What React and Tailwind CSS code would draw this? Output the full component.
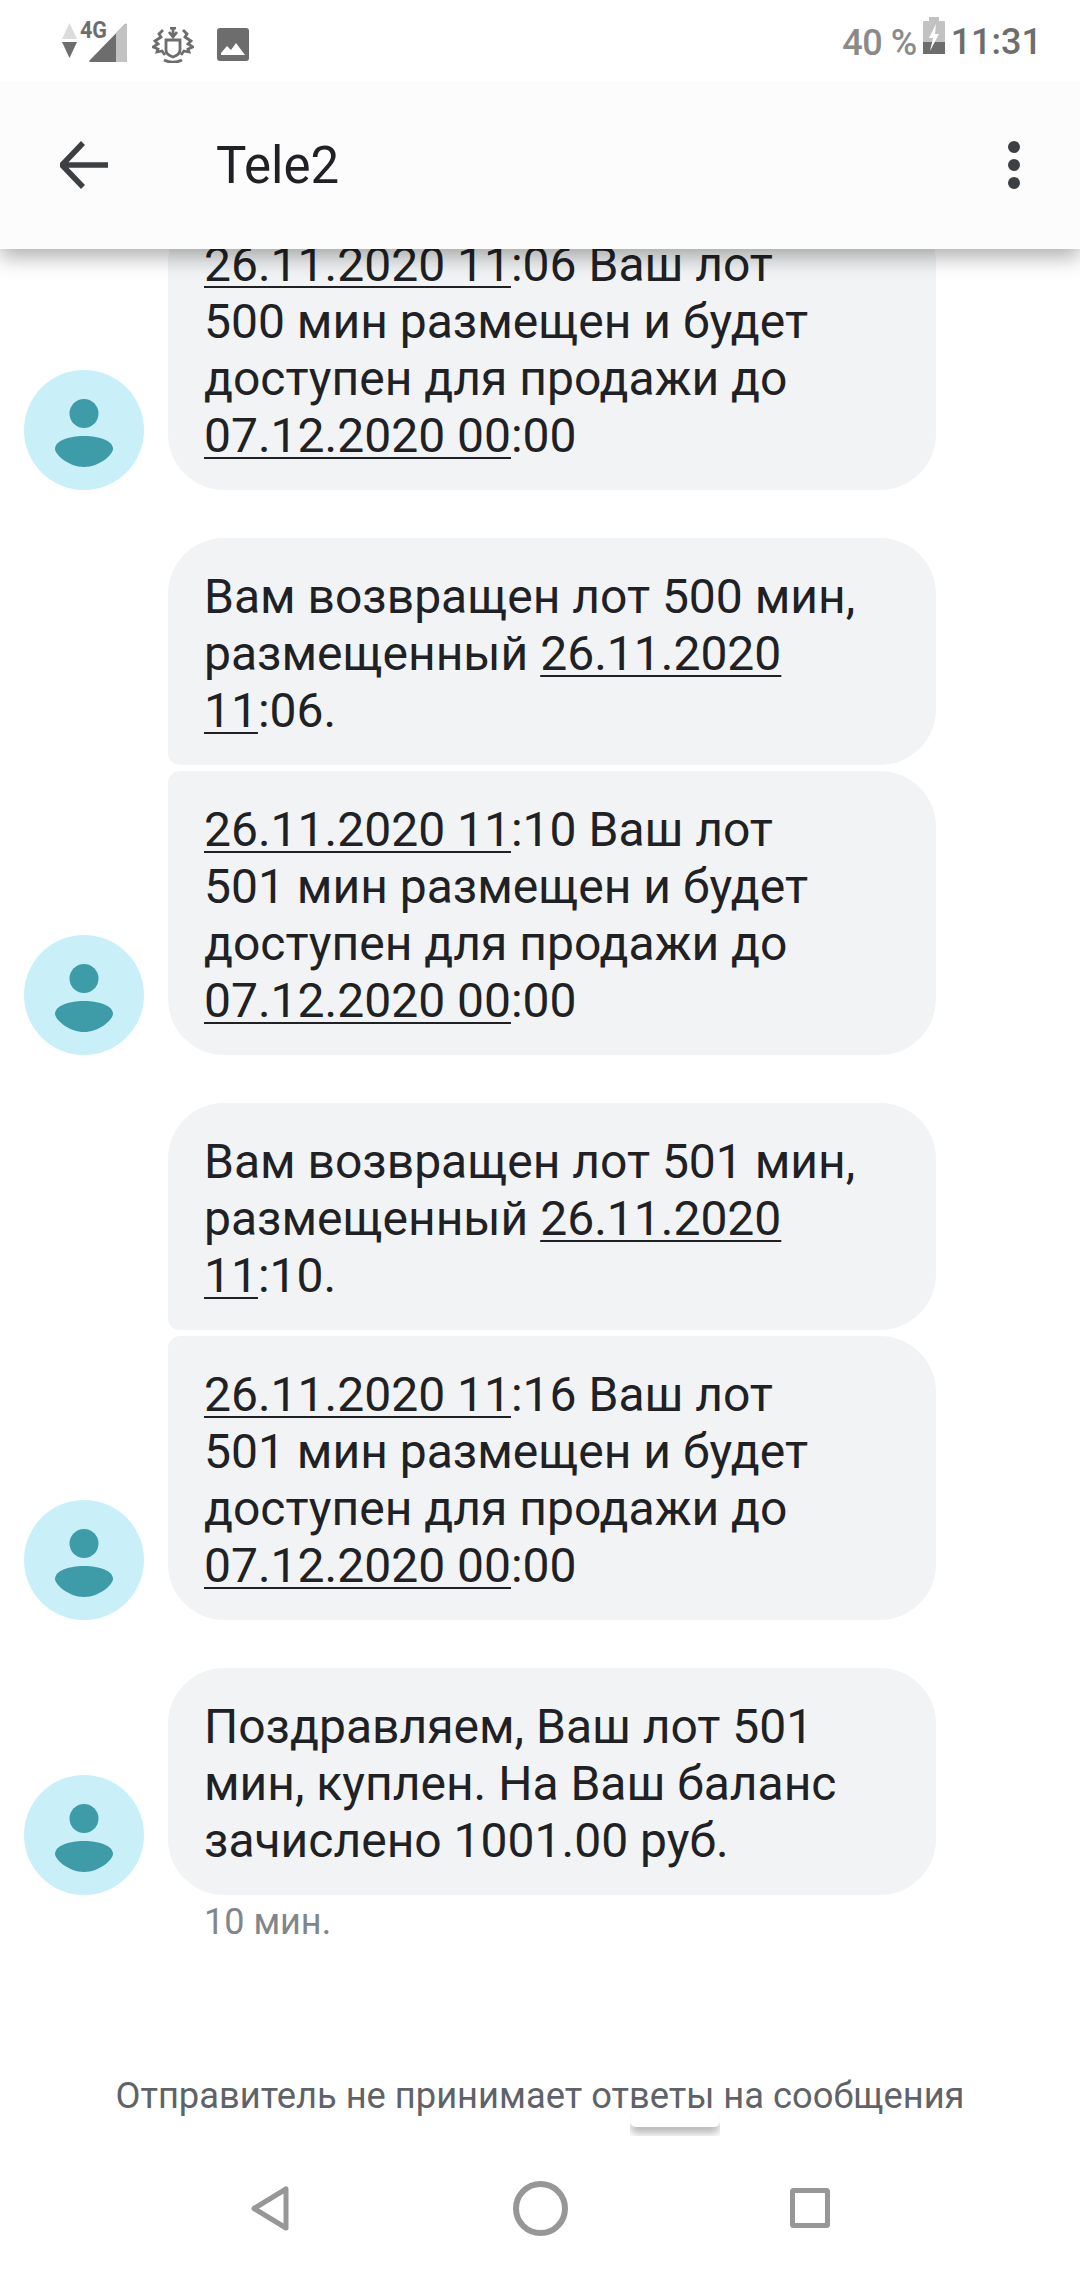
import React from 'react';

const Avatar = () => (
  <div className="w-[120px] h-[120px] rounded-full bg-[#c9f0f8] shrink-0 flex items-center justify-center pt-[5px]">
    <svg width="58" height="68" viewBox="0 0 58 68">
      <circle cx="29" cy="14.500" r="14.500" fill="#3d9ca8" />
      <path d="M29 37c16 0 29 5 29 13 0 5-13 18-29 18S0 55 0 50c0-8 13-13 29-13z" fill="#3d9ca8" />
    </svg>
  </div>
);

const D = ({ children }) => <span className="underline decoration-2 underline-offset-[5px]">{children}</span>;

// shape: the bubbles of one group share a small corner where they touch
const Bubble = ({ children, shape = 'rounded-[56px]' }) => (
  <div className={`w-[768px] bg-[#f1f3f4] px-9 pt-[30px] pb-[26px] text-[48px] leading-[57px] text-[#202124] ${shape}`}>
    {children}
  </div>
);

const Row = ({ avatar, children, className = '' }) => (
  <div className={`flex items-end gap-6 pl-6 ${className}`}>
    {avatar ? <Avatar /> : <div className="w-[120px] shrink-0" />}
    {children}
  </div>
);

const topShape = 'rounded-t-[56px] rounded-br-[56px] rounded-bl-[12px]';
const bottomShape = 'rounded-b-[56px] rounded-tr-[56px] rounded-tl-[12px]';

export default function App() {
  return (
    <div className="w-[1080px] h-[2280px] bg-white overflow-hidden relative font-['Roboto',sans-serif]">
      <div className="h-[81px] bg-white relative z-20 flex items-start justify-between pl-[62px] pr-[38px]">
        <div className="flex items-start mt-[15px]">
          <svg width="66" height="48" viewBox="0 -6 66 48">
            <path d="M0 18 7.500 2 15 18z" fill="#dcdcdc" />
            <path d="M0 21h15L7.500 37z" fill="#6d6d6d" />
            <path d="M27 40 63 3a1.500 1.500 0 0 1 2 1v36a1 1 0 0 1-1 1H28z" fill="#6d6d6d" />
            <path d="M54 12 63 3a1.500 1.500 0 0 1 2 1v36a1 1 0 0 1-1 1H54z" fill="#c2c2c2" />
            <text x="18" y="17" fontSize="24" fontWeight="700" textLength="27" lengthAdjust="spacingAndGlyphs" fill="#6d6d6d" fontFamily="Roboto">4G</text>
          </svg>
          <svg className="ml-[24px] mt-[12px]" width="42" height="36" viewBox="0 0 42 36" fill="none" stroke="#6d6d6d" strokeWidth="2.800">
            <path d="M14 13h14v10c0 4-4 6-7 7-3-1-7-3-7-7z" />
            <path d="M21 1v8M17 5l4 5 4-5M18 1h6" />
            <path d="M11 3 7 7l2 3-6 4 3 3-5 3 5 2-1 3 5-1 3 4" />
            <path d="M31 3l4 4-2 3 6 4-3 3 5 3-5 2 1 3-5-1-3 4" />
            <path d="M12 33c6 3 12 3 18 0" />
          </svg>
          <svg className="ml-[23px] mt-[13px]" width="32" height="33" viewBox="0 0 32 33">
            <rect width="32" height="33" rx="3" fill="#6d6d6d" />
            <path d="M4 27v-2l6-7 4 4 5-7 9 12z" fill="#fff" />
          </svg>
        </div>
        <div className="flex items-start">
          <span className="text-[36px] leading-[42px] mt-[22px] font-medium text-[#8a8a8a] tracking-[-0.5px]">40 %</span>
          <svg className="ml-[6px] mt-[17px]" width="22" height="37" viewBox="0 0 22 37">
            <path d="M6 0h10v4h5a1 1 0 0 1 1 1v32H0V5a1 1 0 0 1 1-1h5z" fill="#c2c2c2" />
            <path d="M0 25h22v12H0z" fill="#6d6d6d" />
            <path d="M13 7 6 21h4l-3 13 9-17h-4z" fill="#fff" />
          </svg>
          <span className="ml-[6px] text-[36px] leading-[42px] mt-[21px] font-medium text-[#6d6d6d]">11:31</span>
        </div>
      </div>

      <div className="h-[168px] bg-[#fcfcfc] relative z-10 shadow-[0_8px_20px_rgba(0,0,0,0.32)] flex items-center">
        <svg className="ml-[60px]" width="48" height="48" viewBox="0 0 48 48" fill="none" stroke="#3c4043" strokeWidth="5.500">
          <path d="M48 24H3M23 2 2 24l21 22" />
        </svg>
        <div className="ml-[108px] pt-[2px] text-[51px] text-[#202124]">Tele2</div>
        <div className="ml-auto mr-[60px] flex flex-col gap-[6px]">
          <div className="w-3 h-3 rounded-full bg-[#3c4043]" />
          <div className="w-3 h-3 rounded-full bg-[#3c4043]" />
          <div className="w-3 h-3 rounded-full bg-[#3c4043]" />
        </div>
      </div>

      <div className="-mt-[43px]">
        <Row avatar>
          <Bubble>
            <D>26.11.2020 11</D>:06 Ваш лот<br />500 мин размещен и будет<br />доступен для продажи до<br /><D>07.12.2020 00</D>:00
          </Bubble>
        </Row>
        <Row className="mt-[48px]">
          <Bubble shape={topShape}>
            Вам возвращен лот 500 мин,<br />размещенный <D>26.11.2020</D><br /><D>11</D>:06.
          </Bubble>
        </Row>
        <Row avatar className="mt-[6px]">
          <Bubble shape={bottomShape}>
            <D>26.11.2020 11</D>:10 Ваш лот<br />501 мин размещен и будет<br />доступен для продажи до<br /><D>07.12.2020 00</D>:00
          </Bubble>
        </Row>
        <Row className="mt-[48px]">
          <Bubble shape={topShape}>
            Вам возвращен лот 501 мин,<br />размещенный <D>26.11.2020</D><br /><D>11</D>:10.
          </Bubble>
        </Row>
        <Row avatar className="mt-[6px]">
          <Bubble shape={bottomShape}>
            <D>26.11.2020 11</D>:16 Ваш лот<br />501 мин размещен и будет<br />доступен для продажи до<br /><D>07.12.2020 00</D>:00
          </Bubble>
        </Row>
        <Row avatar className="mt-[48px]">
          <Bubble>
            Поздравляем, Ваш лот 501<br />мин, куплен. На Ваш баланс<br />зачислено 1001.00 руб.
          </Bubble>
        </Row>
        <div className="ml-[204px] mt-[6px] text-[36px] leading-[42px] text-[#80868b]">10 мин.</div>
        <div className="mt-[132px] text-center text-[36.300px] leading-[42px] text-[#5f6368]">Отправитель не принимает ответы на сообщения</div>
      </div>

      <div className="absolute left-[630px] top-[2115px] w-[90px] h-[21px] overflow-hidden">
        <div className="h-[12px] rounded-[6px] bg-white shadow-[0_6px_8px_rgba(0,0,0,0.3)]" />
      </div>

      <div className="absolute left-0 right-0 bottom-0 h-[110px] flex items-start">
        <svg className="ml-[251px] mt-[16px]" width="38" height="45" viewBox="0 0 38 45" fill="none" stroke="#979797" strokeWidth="5" strokeLinejoin="round">
          <path d="M35 3v39L3 22.500z" />
        </svg>
        <svg className="ml-[224px] mt-[11px]" width="55" height="55" viewBox="0 0 55 55" fill="none" stroke="#979797" strokeWidth="6">
          <circle cx="27.500" cy="27.500" r="24.500" />
        </svg>
        <svg className="ml-[222px] mt-[18px]" width="40" height="40" viewBox="0 0 40 40" fill="none" stroke="#979797" strokeWidth="5">
          <rect x="2.500" y="2.500" width="35" height="35" rx="1" />
        </svg>
      </div>
    </div>
  );
}
